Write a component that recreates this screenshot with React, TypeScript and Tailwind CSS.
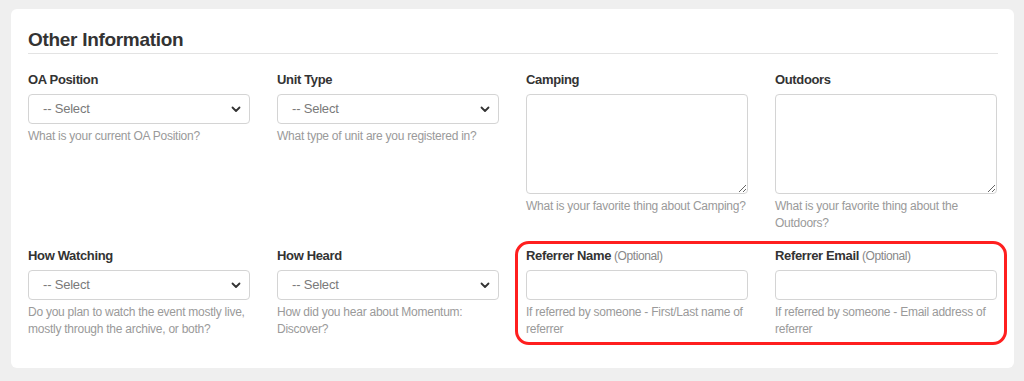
import React from "react";

type Field = {
  label: string;
  optional?: boolean;
  kind: "select" | "textarea" | "input";
  help: string;
};

const fields: Field[] = [
  { label: "OA Position", kind: "select", help: "What is your current OA Position?" },
  { label: "Unit Type", kind: "select", help: "What type of unit are you registered in?" },
  { label: "Camping", kind: "textarea", help: "What is your favorite thing about Camping?" },
  { label: "Outdoors", kind: "textarea", help: "What is your favorite thing about the Outdoors?" },
  {
    label: "How Watching",
    kind: "select",
    help: "Do you plan to watch the event mostly live, mostly through the archive, or both?",
  },
  { label: "How Heard", kind: "select", help: "How did you hear about Momentum: Discover?" },
  {
    label: "Referrer Name",
    optional: true,
    kind: "input",
    help: "If referred by someone - First/Last name of referrer",
  },
  {
    label: "Referrer Email",
    optional: true,
    kind: "input",
    help: "If referred by someone - Email address of referrer",
  },
];

function Chevron() {
  return (
    <svg width="10" height="7" viewBox="0 0 10 7" className="shrink-0">
      <path d="M1.5 1.5 L5 5 L8.5 1.5" fill="none" stroke="#333" strokeWidth="1.8" strokeLinecap="round" strokeLinejoin="round" />
    </svg>
  );
}

function Control({ kind }: { kind: Field["kind"] }) {
  if (kind === "textarea") {
    return (
      <textarea className="block w-full h-[100px] border border-[#d4d4d4] rounded-[4px] bg-white outline-none" />
    );
  }
  if (kind === "input") {
    return <div className="h-[30px] border border-[#d4d4d4] rounded-[4px] bg-white" />;
  }
  return (
    <div className="h-[30px] border border-[#d4d4d4] rounded-[4px] bg-white flex items-center justify-between pl-[14px] pr-[8px]">
      <span className="text-[13px] tracking-[-0.2px] text-[#7a7a7a]">-- Select</span>
      <Chevron />
    </div>
  );
}

function FormField({ f }: { f: Field }) {
  return (
    <div className="flex flex-col">
      <div className="text-[13px] leading-[18px] tracking-[-0.35px] font-bold text-[#333] mb-[5px]">
        {f.label}
        {f.optional && <span className="font-normal text-[12px] tracking-[-0.4px] text-[#888]"> (Optional)</span>}
      </div>
      <Control kind={f.kind} />
      <p className="mt-[4px] text-[12px] leading-[17px] tracking-[-0.25px] text-[#9a9a9a]">{f.help}</p>
    </div>
  );
}

export default function App() {
  return (
    <div
      className="w-[1024px] h-[381px] bg-[#efefef] pt-[9px] pl-[11px]"
      style={{ fontFamily: '"Liberation Sans", Arial, sans-serif' }}
    >
      <div className="relative w-[1003px] h-[359px] bg-white rounded-[6px] pt-[19px] pl-[17px] pr-[17px]">
        <h2 className="text-[19px] leading-[24px] tracking-[-0.3px] font-bold text-[#333] pb-[1px] border-b border-[#e3e3e3] mr-[-1px]">
          Other Information
        </h2>
        <div className="grid grid-cols-4 gap-x-[27px] gap-y-[15px] mt-[17px] w-[969px]">
          {fields.map((f) => (
            <FormField key={f.label} f={f} />
          ))}
        </div>
        {/* highlight around referrer fields */}
        <div className="absolute left-[504px] top-[232px] w-[492px] h-[104px] border-[3px] border-[#ff1f1f] rounded-[14px] pointer-events-none" />
      </div>
    </div>
  );
}
